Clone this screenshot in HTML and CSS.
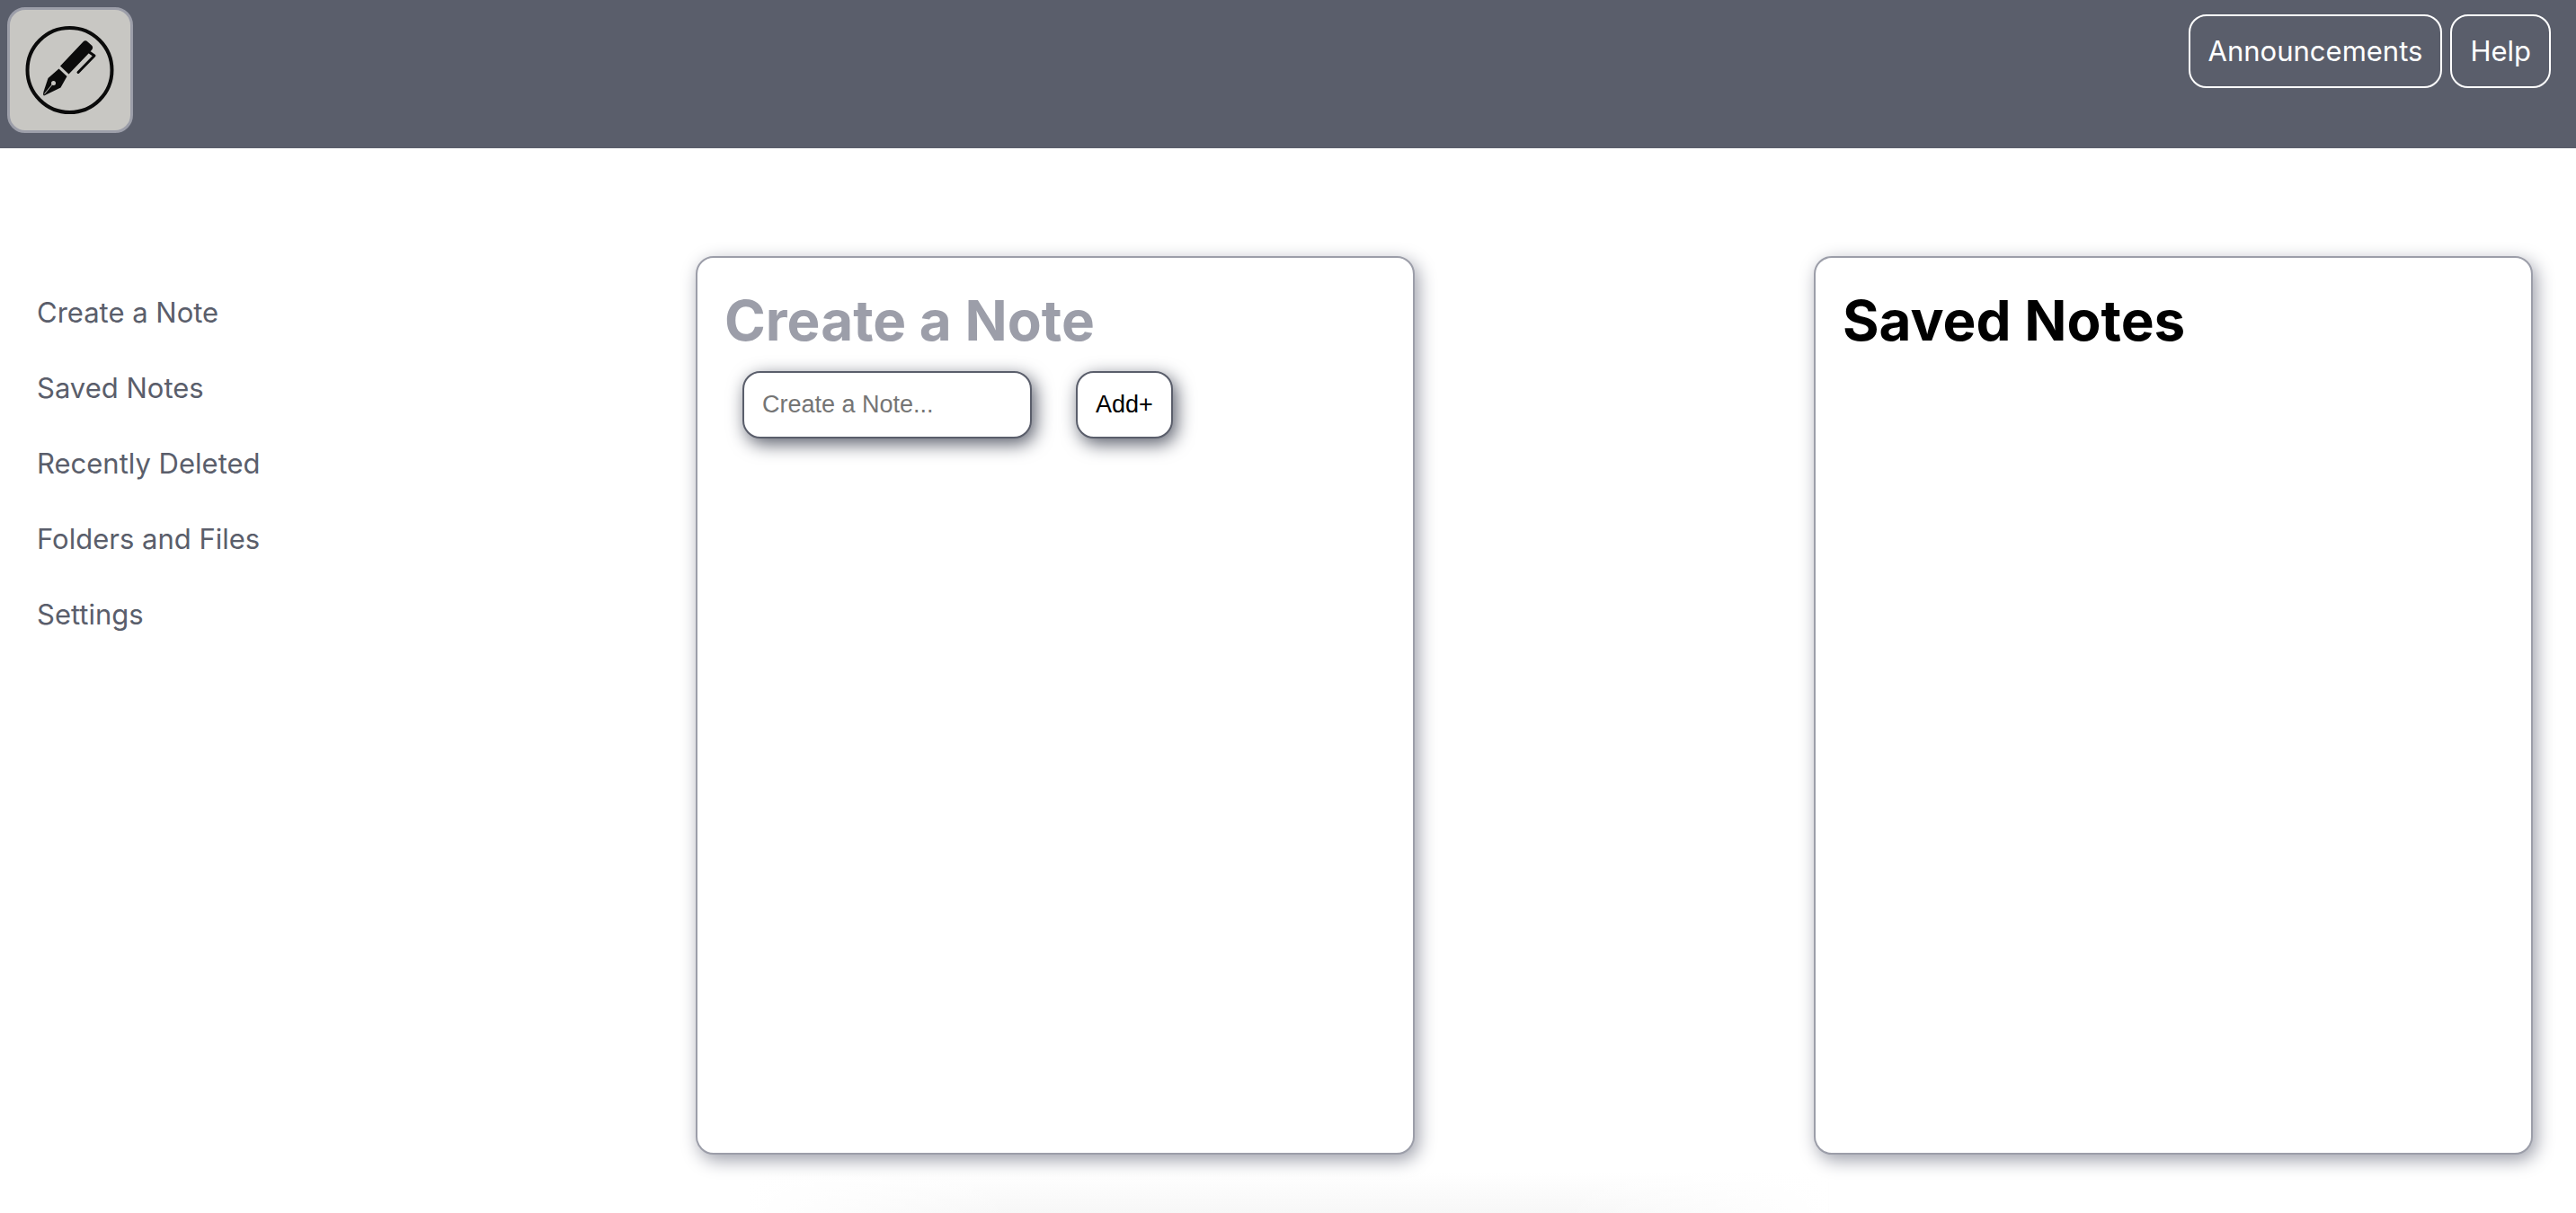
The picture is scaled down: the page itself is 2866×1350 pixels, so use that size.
FILE: index.html
```html
<!DOCTYPE html>
<html lang="en">
<head>
<meta charset="utf-8">
<title>Notes</title>
<meta name="viewport" content="width=device-width, initial-scale=1">
<link rel="stylesheet" href="styles.css">
</head>
<body>
<header class="topbar">
  <a class="logo" href="#" aria-label="Home">
    <svg viewBox="0 0 134 134" aria-hidden="true">
      <circle cx="66.500" cy="67" r="47" fill="none" stroke="#0b0b0b" stroke-width="4"/>
      <path fill="#0b0b0b" d="M81.500 35.500Q84 33 86.500 35.500L91 39.500Q93 41.500 91.500 44L89 47 65.500 71.500 56 62.500Z"/>
      <path d="M89 47.500L94 51 76 69.500" fill="none" stroke="#0b0b0b" stroke-width="3" stroke-linecap="round" stroke-linejoin="round"/>
      <path fill="#0b0b0b" d="M54.500 65.500L63.500 74 56.500 86.500 38 95.500Q36.500 95 37.500 91L42.500 76Z"/>
      <circle cx="48.500" cy="81.500" r="2.500" fill="#c8c7c3"/>
      <path d="M48 82L38.500 93.500" stroke="#c8c7c3" stroke-width="1"/>
    </svg>
  </a>
  <div class="actions">
    <button class="action" type="button">Announcements</button>
    <button class="action" type="button">Help</button>
  </div>
</header>
<main class="content">
  <nav class="sidebar" aria-label="Main">
    <a href="#create">Create a Note</a>
    <a href="#saved">Saved Notes</a>
    <a href="#deleted">Recently Deleted</a>
    <a href="#folders">Folders and Files</a>
    <a href="#settings">Settings</a>
  </nav>
  <section class="card" id="create">
    <h1 class="title title-muted">Create a Note</h1>
    <form class="note-form">
      <input class="field" type="text" placeholder="Create a Note..." aria-label="Create a Note">
      <button class="add" type="button">Add+</button>
    </form>
  </section>
  <section class="card" id="saved">
    <h1 class="title">Saved Notes</h1>
  </section>
</main>
</body>
</html>
```
FILE: styles.css
```css
* {
  box-sizing: border-box;
}

body {
  margin: 0;
  min-height: 100vh;
  background:
    linear-gradient(to right, #fff, transparent 25%, transparent 75%, #fff) center bottom / 42% 45px no-repeat,
    linear-gradient(to top, #f7f7f7, #fff) center bottom / 42% 45px no-repeat,
    #fff;
  font-family: Inter, "Liberation Sans", sans-serif;
  font-size: 31px;
  line-height: 38px;
}

.topbar {
  display: flex;
  justify-content: space-between;
  align-items: flex-start;
  padding: 8px 28px 17px 8px;
  background: #5a5e6b;
}

.logo {
  width: 140px;
  height: 140px;
  border: 3px solid #9c9ea9;
  border-radius: 20px;
  background: #c8c7c3;
}

.logo svg {
  display: block;
}

.actions {
  display: flex;
  gap: 9px;
  padding-top: 8px;
}

.action {
  padding: 20px;
  border: 2px solid #fff;
  border-radius: 20px;
  background: none;
  color: #fff;
  font: inherit;
}

.content {
  display: flex;
  justify-content: space-between;
  align-items: flex-start;
  padding: 120px 48px 64px 0;
}

.sidebar {
  display: flex;
  flex-direction: column;
  gap: 46px;
  width: 330px;
  padding: 44px 0 0 41px;
}

.sidebar a {
  color: #5a5e6b;
  text-decoration: none;
  white-space: nowrap;
}

.card {
  width: 800px;
  min-height: 1000px;
  padding: 32px 30px;
  border: 2px solid #9c9ea9;
  border-radius: 20px;
  background: #fff;
  box-shadow: 4px 6px 20px #9c9ea9;
}

.title {
  margin: 0;
  font-size: 62px;
  line-height: 76px;
  font-weight: 700;
}

.title-muted {
  color: #9c9ea9;
}

.note-form {
  display: flex;
  gap: 49px;
  padding: 18px 20px;
}

.field,
.add {
  height: 75px;
  padding: 20px;
  border: 2px solid #5a5e6b;
  border-radius: 20px;
  background: #fff;
  box-shadow: 4px 6px 20px #5a5e6b;
  color: #000;
  font-family: "Liberation Sans", Arial, sans-serif;
  font-size: 27px;
  line-height: 31px;
}

.field {
  width: 322px;
}

.field::placeholder {
  color: #757575;
}
```
